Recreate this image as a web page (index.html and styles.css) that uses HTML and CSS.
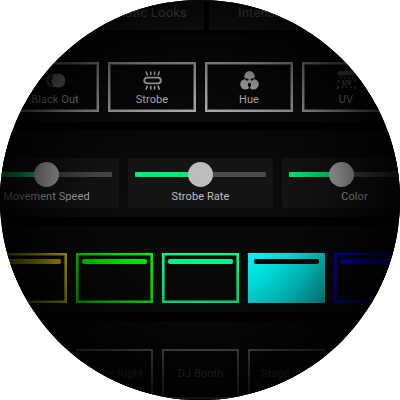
FILE: index.html
```
<!DOCTYPE html>
<html lang="en">
<head>
<meta charset="utf-8">
<title>Lighting controls</title>
<link rel="stylesheet" href="styles.css">
</head>
<body>
<main class="lens">
  <section class="looks">
    <div class="look look-auto">Automatic Looks</div>
    <div class="look look-intensity">Intensity</div>
  </section>
  <section class="section effects">
    <div class="effect">
      <svg class="icon" viewBox="0 0 20 20"><circle cx="7.5" cy="10" r="6" fill="none" stroke="#aaa" stroke-width="2.4" stroke-dasharray="1.5 1.3"/><circle cx="13" cy="10" r="7.3" fill="#aaa"/></svg>
      <span>Black Out</span>
    </div>
    <div class="effect">
      <svg class="icon" viewBox="0 0 20 20" fill="none" stroke="#bbb" stroke-linecap="round"><rect x="1.400" y="7" width="17.400" height="6" rx="3" stroke-width="2"/><path stroke-width="1.700" d="M4.400 4 3.400 1M8.200 3.700V1M12.200 3.700V1M16 4l1-3M4.400 16l-1 3M8.200 16.300V19M12.200 16.300V19M16 16l1 3"/></svg>
      <span>Strobe</span>
    </div>
    <div class="effect">
      <svg class="icon" viewBox="0 0 20 20"><g fill="#b4b4b4"><circle cx="10" cy="5.600" r="5.500"/><circle cx="5.800" cy="13.900" r="5.500"/><circle cx="14.200" cy="13.900" r="5.500"/></g><path fill="#080808" d="M4.800 7.800q2.200-.5 4.400.9l-.7 1.600Q6 10.400 4.800 7.800zM15.200 7.800q-2.200-.5-4.400.9l.7 1.600q2.500.1 3.700-2.500zM10 12.300l1.700 1.100q.2 3.100-1.700 5-1.900-1.900-1.700-5z"/></svg>
      <span>Hue</span>
    </div>
    <div class="effect">
      <svg class="icon" viewBox="0 0 20 20"><rect x=".8" y="0" width="19" height="4.600" rx="2" fill="#888"/><path stroke="#aaa" stroke-width="1.300" fill="none" d="M4.500 6 4 7.800M8.300 6v1.800M12.300 6v1.800M16 6l.5 1.800M2 9.500 1.400 12M18.800 9.500l.6 2.500M1.300 16l-.8 2.800M6 16l-.4 1.800M10.200 16v1.800M14.400 16l.4 1.800M19 16l.8 2.800"/><text x="10.400" y="14.500" text-anchor="middle" class="icon-text">UV</text></svg>
      <span>UV</span>
    </div>
  </section>
  <section class="section sliders">
    <div class="slider"><div class="track"><i class="fill half"></i><i class="knob"></i></div><span>Movement Speed</span></div>
    <div class="slider"><div class="track"><i class="fill half"></i><i class="knob"></i></div><span>Strobe Rate</span></div>
    <div class="slider"><div class="track"><i class="fill forty"></i><i class="knob"></i></div><span>Color</span></div>
  </section>
  <section class="section swatches">
    <div class="swatch yellow"><i></i></div>
    <div class="swatch green"><i></i></div>
    <div class="swatch mint"><i></i></div>
    <div class="swatch cyan"><i></i></div>
    <div class="swatch blue"><i></i></div>
  </section>
  <section class="section places">
    <div class="place">Stage Right</div>
    <div class="place">DJ Booth</div>
    <div class="place">Stage Left</div>
  </section>
  <div class="vignette"></div>
</main>
</body>
</html>
```
FILE: styles.css
```
* { box-sizing: border-box; }
html, body { margin: 0; background: #fff; }
.lens {
  position: relative;
  width: 400px;
  height: 400px;
  overflow: hidden;
  border-radius: 50%;
  background: #000;
  color: #bdbdbd;
  font: 11px/14px Roboto, sans-serif;
  letter-spacing: 0.08px;
  white-space: nowrap;
}
.vignette {
  position: absolute;
  inset: 0;
  background: radial-gradient(circle 200px at 200px 196px, rgba(0,0,0,0) 38%, rgba(0,0,0,.12) 52%, rgba(0,0,0,.3) 66%, rgba(0,0,0,.5) 78%, rgba(0,0,0,.7) 89%, rgba(0,0,0,.84) 100%);
}
.looks {
  display: flex;
  gap: 5px;
  height: 30px;
  margin-left: 72px;
}
.look {
  width: 132px;
  height: 30px;
  padding-top: 4px;
  background: #202020;
  color: #a4a4a4;
  font-size: 13px;
  line-height: 18px;
  letter-spacing: 0.2px;
}
.look-auto { padding-right: 17px; text-align: right; }
.look-intensity { padding-left: 29px; }
.section {
  display: flex;
  height: 86px;
  margin-bottom: 9px;
  background: linear-gradient(#080808, #0c0c0c);
}
.effects {
  gap: 9px;
  height: 89px;
  margin-top: 3px;
  padding: 29px 0 0 11px;
}
.effect {
  flex: 0 0 88px;
  height: 50px;
  display: flex;
  flex-direction: column;
  align-items: center;
  padding-top: 6.5px;
  border: 2.5px solid #adadad;
  outline: 0.5px solid #555;
  outline-offset: -3px;
  background: #080808;
}
.icon { flex: none; width: 19px; height: 19px; margin-bottom: 3px; }
.icon-text { font: 700 7.5px Roboto, sans-serif; fill: #aaa; letter-spacing: .3px; }
.sliders { gap: 9px; margin-left: -26px; padding-top: 27px; }
.slider {
  flex: 0 0 145px;
  height: 50px;
  padding: 14px 7px 0;
  background: #141414;
  text-align: center;
}
.track {
  display: flex;
  align-items: center;
  height: 5px;
  margin-bottom: 13px;
  border-radius: 1px;
  background: #4b4b4b;
}
.fill { height: 5px; background: #00ed79; border-radius: 1px 0 0 1px; }
.half { width: 50%; }
.forty { width: 40%; }
.knob {
  flex: none;
  width: 25px;
  height: 25px;
  margin-left: -12.5px;
  border-radius: 50%;
  background: #bdbdbd;
}
.swatches { gap: 9px; margin-left: -10px; padding-top: 27px; }
.swatch {
  --tone: #00f000;
  flex: 0 0 77px;
  height: 50px;
  padding: 4px;
  border: 2px solid var(--tone);
  background: #080808;
  box-shadow: inset 0 0 0 .6px var(--tone);
}
.swatch i { display: block; height: 5px; border-radius: 2px; background: var(--tone); }
.yellow { --tone: #e8df00; }
.mint { --tone: #00f58a; }
.cyan { --tone: #00f5f2; background: var(--tone); }
.cyan i { background: #080808; }
.blue { --tone: #0000ee; }
.places { gap: 9px; padding: 28px 0 0 76px; }
.place {
  flex: 0 0 77px;
  height: 50px;
  border: 2px solid #747474;
  background: #080808;
  color: #565656;
  line-height: 45px;
  text-align: center;
}
```
